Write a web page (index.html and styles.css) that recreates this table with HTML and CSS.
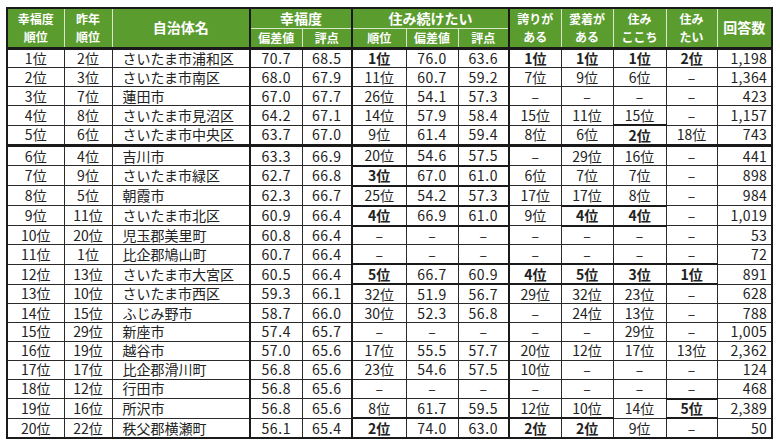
FILE: index.html
```html
<!DOCTYPE html>
<html lang="ja">
<head>
<meta charset="utf-8">
<link rel="stylesheet" href="styles.css">
</head>
<body>
<table class="rank">
<colgroup>
<col class="w57"><col class="w48"><col class="w138"><col class="w52"><col class="w50"><col class="w54"><col class="w52"><col class="w51"><col class="w52"><col class="w52"><col class="w53"><col class="w51"><col class="w55">
</colgroup>
<thead>
<tr class="h1">
<th rowspan="2" class="first">幸福度<br>順位</th>
<th rowspan="2">昨年<br>順位</th>
<th rowspan="2" class="big">自治体名</th>
<th colspan="2" class="grp big">幸福度</th>
<th colspan="3" class="grp big">住み続けたい</th>
<th rowspan="2" class="grp">誇りが<br>ある</th>
<th rowspan="2">愛着が<br>ある</th>
<th rowspan="2">住み<br>ここち</th>
<th rowspan="2" class="dl">住み<br>たい</th>
<th rowspan="2" class="big last">回答数</th>
</tr>
<tr class="h2">
<th class="grp">偏差値</th>
<th class="dl">評点</th>
<th class="grp">順位</th>
<th class="dl">偏差値</th>
<th class="dl">評点</th>
</tr>
</thead>
<tbody>
<tr><td>1位</td><td>2位</td><td class="nm">さいたま市浦和区</td><td class="n">70.7</td><td class="n">68.5</td><td class="b">1位</td><td class="n">76.0</td><td class="n">63.6</td><td class="b">1位</td><td class="b">1位</td><td class="b">1位</td><td class="b">2位</td><td class="r">1,198</td></tr>
<tr><td>2位</td><td>3位</td><td class="nm">さいたま市南区</td><td class="n">68.0</td><td class="n">67.9</td><td>11位</td><td class="n">60.7</td><td class="n">59.2</td><td>7位</td><td>9位</td><td>6位</td><td>–</td><td class="r">1,364</td></tr>
<tr><td>3位</td><td>7位</td><td class="nm">蓮田市</td><td class="n">67.0</td><td class="n">67.7</td><td>26位</td><td class="n">54.1</td><td class="n">57.3</td><td>–</td><td>–</td><td>–</td><td>–</td><td class="r">423</td></tr>
<tr><td>4位</td><td>8位</td><td class="nm">さいたま市見沼区</td><td class="n">64.2</td><td class="n">67.1</td><td>14位</td><td class="n">57.9</td><td class="n">58.4</td><td>15位</td><td>11位</td><td>15位</td><td>–</td><td class="r">1,157</td></tr>
<tr><td>5位</td><td>6位</td><td class="nm">さいたま市中央区</td><td class="n">63.7</td><td class="n">67.0</td><td>9位</td><td class="n">61.4</td><td class="n">59.4</td><td>8位</td><td>6位</td><td class="b bx">2位</td><td>18位</td><td class="r">743</td></tr>
<tr class="sep"><td>6位</td><td>4位</td><td class="nm">吉川市</td><td class="n">63.3</td><td class="n">66.9</td><td>20位</td><td class="n">54.6</td><td class="n">57.5</td><td>–</td><td>29位</td><td>16位</td><td>–</td><td class="r">441</td></tr>
<tr><td>7位</td><td>9位</td><td class="nm">さいたま市緑区</td><td class="n">62.7</td><td class="n">66.8</td><td class="b bx">3位</td><td class="n bx">67.0</td><td class="n bx">61.0</td><td>6位</td><td>7位</td><td>7位</td><td>–</td><td class="r">898</td></tr>
<tr><td>8位</td><td>5位</td><td class="nm">朝霞市</td><td class="n">62.3</td><td class="n">66.7</td><td>25位</td><td class="n">54.2</td><td class="n">57.3</td><td>17位</td><td>17位</td><td>8位</td><td>–</td><td class="r">984</td></tr>
<tr><td>9位</td><td>11位</td><td class="nm">さいたま市北区</td><td class="n">60.9</td><td class="n">66.4</td><td class="b bx">4位</td><td class="n bx">66.9</td><td class="n bx">61.0</td><td>9位</td><td class="b bx">4位</td><td class="b bx">4位</td><td>–</td><td class="r">1,019</td></tr>
<tr><td>10位</td><td>20位</td><td class="nm">児玉郡美里町</td><td class="n">60.8</td><td class="n">66.4</td><td>–</td><td>–</td><td>–</td><td>–</td><td>–</td><td>–</td><td>–</td><td class="r">53</td></tr>
<tr><td>11位</td><td>1位</td><td class="nm">比企郡鳩山町</td><td class="n">60.7</td><td class="n">66.4</td><td>–</td><td>–</td><td>–</td><td>–</td><td>–</td><td>–</td><td>–</td><td class="r">72</td></tr>
<tr><td>12位</td><td>13位</td><td class="nm">さいたま市大宮区</td><td class="n">60.5</td><td class="n">66.4</td><td class="b bx">5位</td><td class="n bx">66.7</td><td class="n bx">60.9</td><td class="b bx">4位</td><td class="b bx">5位</td><td class="b bx">3位</td><td class="b bx">1位</td><td class="r">891</td></tr>
<tr><td>13位</td><td>10位</td><td class="nm">さいたま市西区</td><td class="n">59.3</td><td class="n">66.1</td><td>32位</td><td class="n">51.9</td><td class="n">56.7</td><td>29位</td><td>32位</td><td>23位</td><td>–</td><td class="r">628</td></tr>
<tr><td>14位</td><td>15位</td><td class="nm">ふじみ野市</td><td class="n">58.7</td><td class="n">66.0</td><td>30位</td><td class="n">52.3</td><td class="n">56.8</td><td>–</td><td>24位</td><td>13位</td><td>–</td><td class="r">788</td></tr>
<tr><td>15位</td><td>29位</td><td class="nm">新座市</td><td class="n">57.4</td><td class="n">65.7</td><td>–</td><td>–</td><td>–</td><td>–</td><td>–</td><td>29位</td><td>–</td><td class="r">1,005</td></tr>
<tr><td>16位</td><td>19位</td><td class="nm">越谷市</td><td class="n">57.0</td><td class="n">65.6</td><td>17位</td><td class="n">55.5</td><td class="n">57.7</td><td>20位</td><td>12位</td><td>17位</td><td>13位</td><td class="r">2,362</td></tr>
<tr><td>17位</td><td>17位</td><td class="nm">比企郡滑川町</td><td class="n">56.8</td><td class="n">65.6</td><td>23位</td><td class="n">54.6</td><td class="n">57.5</td><td>10位</td><td>–</td><td>–</td><td>–</td><td class="r">124</td></tr>
<tr><td>18位</td><td>12位</td><td class="nm">行田市</td><td class="n">56.8</td><td class="n">65.6</td><td>–</td><td>–</td><td>–</td><td>–</td><td>–</td><td>–</td><td>–</td><td class="r">468</td></tr>
<tr><td>19位</td><td>16位</td><td class="nm">所沢市</td><td class="n">56.8</td><td class="n">65.6</td><td>8位</td><td class="n">61.7</td><td class="n">59.5</td><td>12位</td><td>10位</td><td>14位</td><td class="b bx">5位</td><td class="r">2,389</td></tr>
<tr><td>20位</td><td>22位</td><td class="nm">秩父郡横瀬町</td><td class="n">56.1</td><td class="n">65.4</td><td class="b bx">2位</td><td class="n bx">74.0</td><td class="n bx">63.0</td><td class="b bx">2位</td><td class="b bx">2位</td><td>9位</td><td>–</td><td class="r">50</td></tr>
</tbody>
</table>
</body>
</html>
```
FILE: styles.css
```css
body {
  margin: 0;
  padding: 7px 0 0 6px;
  background: #ffffff;
  font-family: "Noto Sans CJK JP", "Noto Sans", sans-serif;
}
.rank {
  border-collapse: collapse;
  table-layout: fixed;
  width: 765px;
  border: 2px solid #1a1a1a;
}
.w57 { width: 57px; }
.w48 { width: 48px; }
.w138 { width: 138px; }
.w52 { width: 52px; }
.w50 { width: 50px; }
.w54 { width: 54px; }
.w51 { width: 51px; }
.w53 { width: 53px; }
.w55 { width: 55px; }

.rank th {
  background: #5b9c2f;
  color: #ffffff;
  font-weight: 700;
  font-size: 12px;
  line-height: 17.5px;
  padding: 0;
  border: 1px solid #d6e8c8;
  text-align: center;
  vertical-align: middle;
  white-space: nowrap;
}
.rank th.big { font-size: 14px; }
.rank .h1 th { border-top: 2px solid #1a1a1a; height: 19px; }
.rank .h2 th { height: 15px; }
.rank th.first { border-left: 2px solid #1a1a1a; }
.rank th.last { border-right: 2px solid #1a1a1a; }
.rank th.grp { border-left: 2px solid #1a1a1a; }
.rank th.dl { border-left: 1px dotted #e8f2e0; }
.rank thead tr:last-child th,
.rank th[rowspan] { border-bottom: 3px solid #1a1a1a; }

.rank td {
  height: 17.9px;
  padding: 0;
  font-size: 14px;
  line-height: 17px;
  color: #222222;
  text-align: center;
  border: 1px solid #2a2a2a;
  white-space: nowrap;
  overflow: hidden;
}
.rank td:nth-child(5),
.rank td:nth-child(7),
.rank td:nth-child(8),
.rank td:nth-child(12) {
  border-left: 1px dotted #444444;
}
.rank td:nth-child(4),
.rank td:nth-child(6),
.rank td:nth-child(9) {
  border-left: 2px solid #1a1a1a;
}
.rank td:last-child { border-right: 2px solid #1a1a1a; }
.rank td.nm { text-align: left; padding-left: 10px; }
.rank td.n { letter-spacing: 0.6px; }
.rank td.r { text-align: right; padding-right: 4px; letter-spacing: 0.3px; }
.rank td.b { font-weight: 700; }
.rank td.bx {
  border-top: 2px solid #1a1a1a;
  border-bottom: 2px solid #1a1a1a;
}
.rank tr.sep td { border-top: 3px solid #1a1a1a; }
.rank tbody tr:last-child td { border-bottom: 2px solid #1a1a1a; }
```
